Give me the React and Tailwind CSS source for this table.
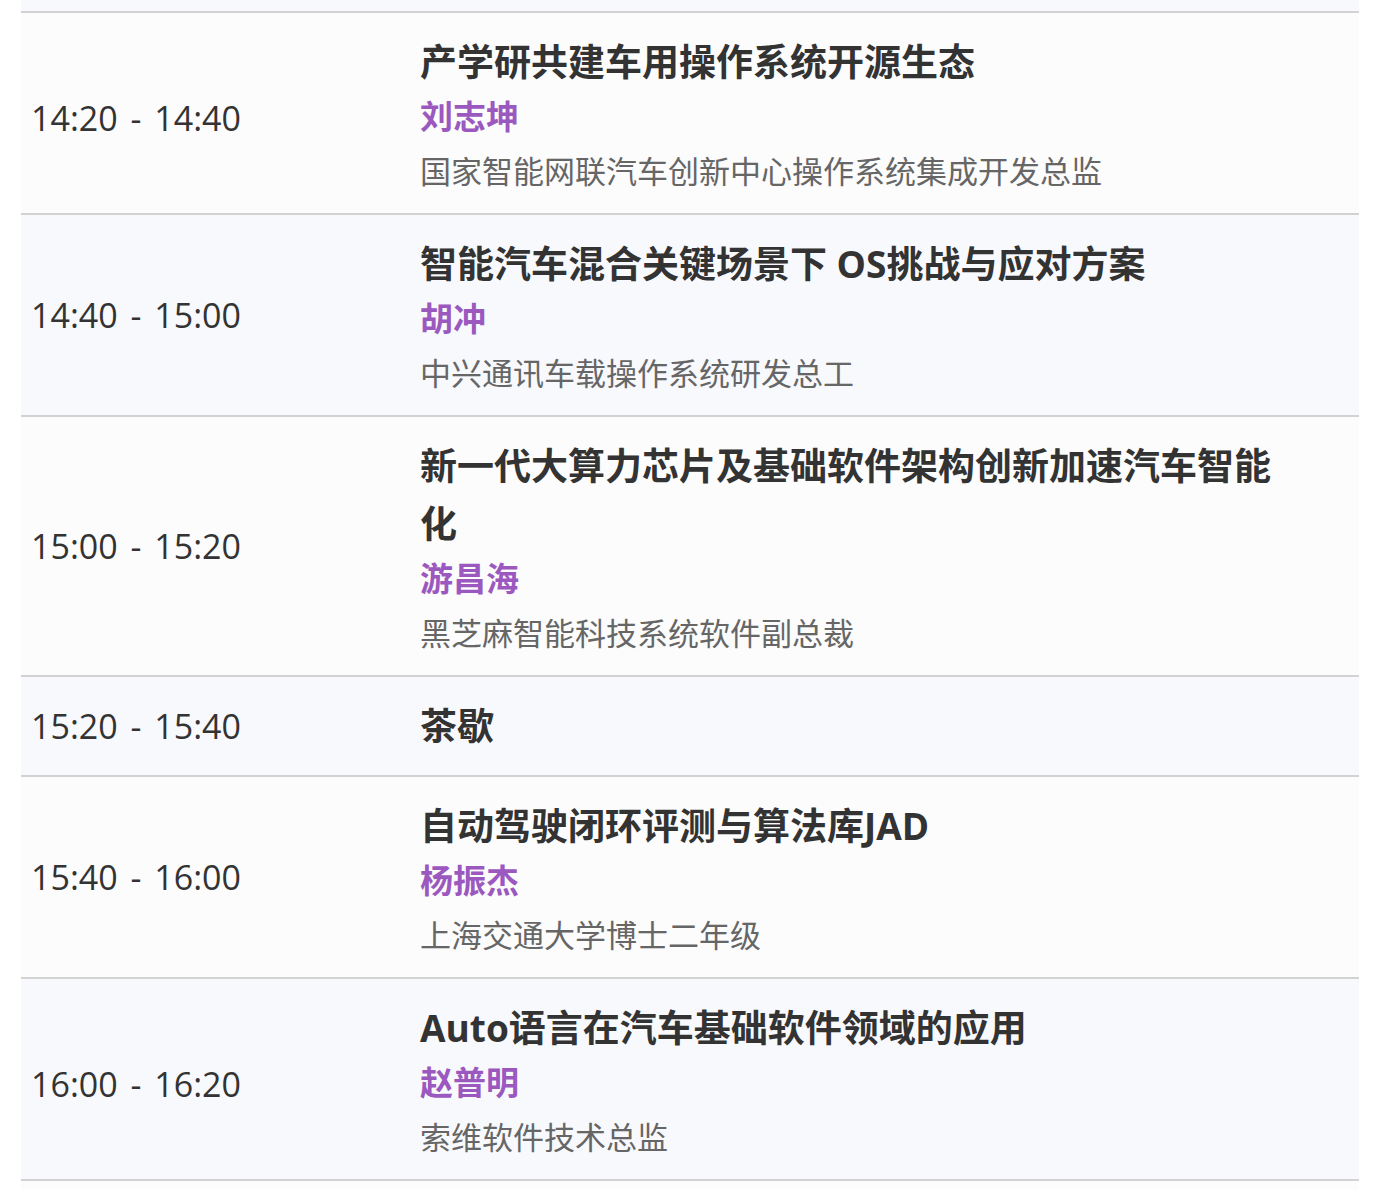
import React from 'react';

const rows = [
  {
    time: '14:20 - 14:40',
    title: '产学研共建车用操作系统开源生态',
    name: '刘志坤',
    org: '国家智能网联汽车创新中心操作系统集成开发总监',
    low: true,
  },
  {
    time: '14:40 - 15:00',
    title: '智能汽车混合关键场景下 OS挑战与应对方案',
    name: '胡冲',
    org: '中兴通讯车载操作系统研发总工',
  },
  {
    time: '15:00 - 15:20',
    title: '新一代大算力芯片及基础软件架构创新加速汽车智能化',
    name: '游昌海',
    org: '黑芝麻智能科技系统软件副总裁',
  },
  { time: '15:20 - 15:40', title: '茶歇' },
  {
    time: '15:40 - 16:00',
    title: '自动驾驶闭环评测与算法库JAD',
    name: '杨振杰',
    org: '上海交通大学博士二年级',
  },
  {
    time: '16:00 - 16:20',
    title: 'Auto语言在汽车基础软件领域的应用',
    name: '赵普明',
    org: '索维软件技术总监',
    low: true,
  },
];

const latin = { fontFamily: '"Open Sans", "Noto Sans", sans-serif' };
const cjk = { fontFamily: '"Open Sans", "Noto Sans CJK SC", "Noto Sans", sans-serif' };

export default function App() {
  return (
    <div className="min-h-screen bg-white">
      <div className="ml-[21px] w-[1338px]">
        {/* 前一行的尾部 */}
        <div className="h-[11px] bg-[#f8f9fc]" />

        {rows.map((r, i) => (
          <div
            key={r.time}
            className={`grid grid-cols-[399px_1fr] border-t-2 border-[#d2d2d2] ${
              i % 2 === 0 ? 'bg-[#fcfcfc]' : 'bg-[#f8f9fc]'
            }`}
          >
            <div className={`flex items-center pl-[10px] ${r.low ? 'pt-[9px]' : ''}`}>
              <span
                className="text-[34px] leading-[58px] text-[#333333] [word-spacing:4px]"
                style={latin}
              >
                {r.time}
              </span>
            </div>
            <div className={`pt-[20px] pr-[69px] ${r.org ? 'pb-[17px]' : 'pb-[20px]'}`} style={cjk}>
              <div className="text-[37px] font-bold leading-[58px] text-[#333333]">{r.title}</div>
              {r.name && (
                <div className="text-[33px] font-bold leading-[52px] text-[#9b59c0]">{r.name}</div>
              )}
              {r.org && (
                <div className="pt-[3px] text-[31px] leading-[50px] text-[#666666]">{r.org}</div>
              )}
            </div>
          </div>
        ))}

        <div className="h-[11px] border-t-2 border-[#d2d2d2] bg-[#fcfcfc]" />
      </div>
    </div>
  );
}
